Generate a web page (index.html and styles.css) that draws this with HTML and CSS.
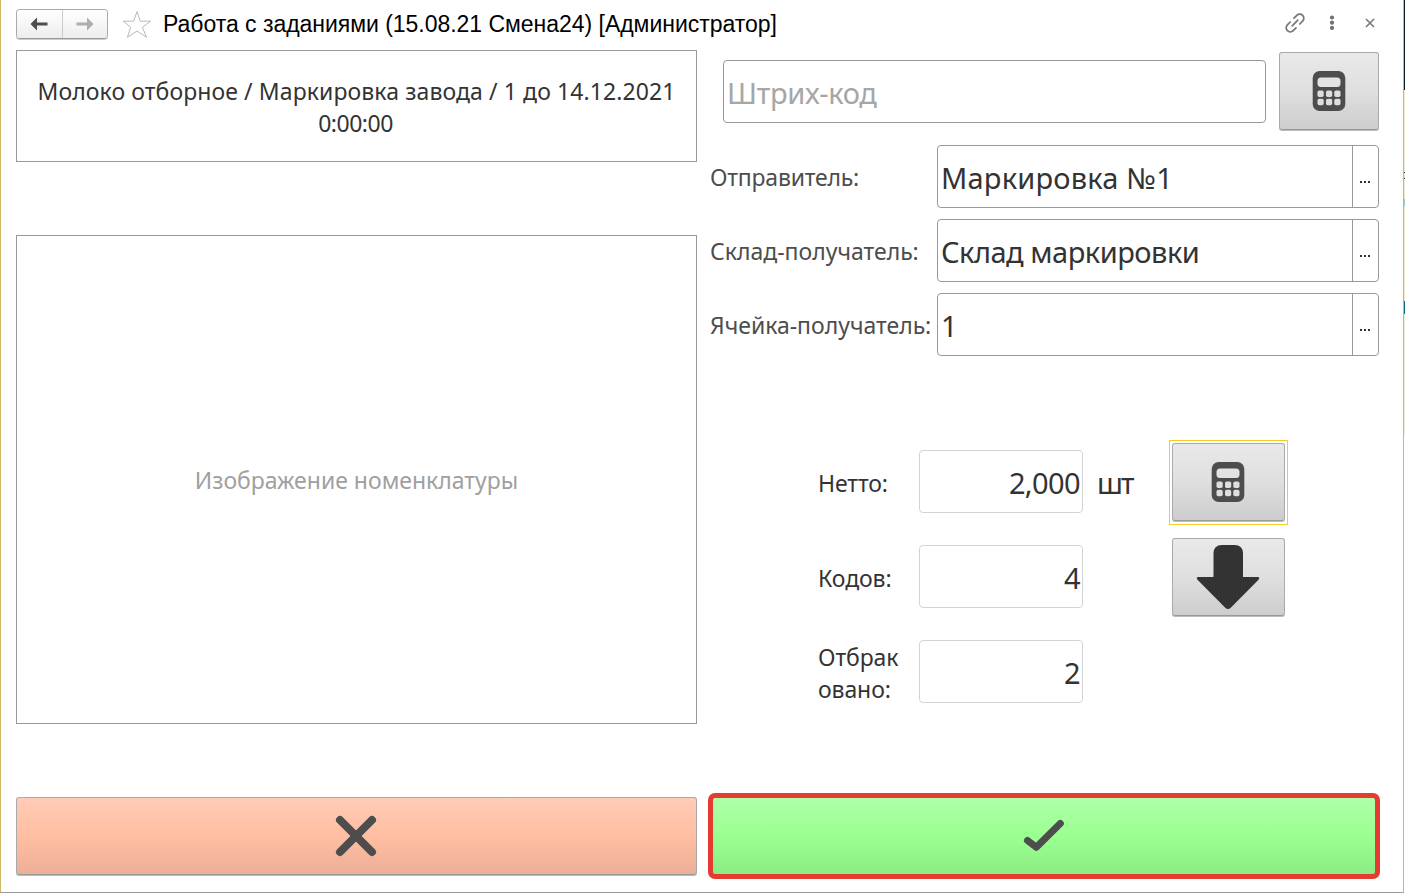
FILE: index.html
```html
<!DOCTYPE html>
<html lang="ru">
<head>
<meta charset="utf-8">
<title>Работа с заданиями</title>
<link rel="stylesheet" href="styles.css">
</head>
<body>
<div class="desktop">
<div class="window">
  <header class="titlebar">
    <div class="nav">
      <button class="nav-btn" aria-label="Назад"><svg width="18" height="14" viewBox="0 0 18 14"><path d="M0.5 7 7 .5V5.500H17.500V8.500H7V13.500Z" fill="#4d4d4d"/></svg></button>
      <button class="nav-btn" aria-label="Вперед"><svg width="18" height="14" viewBox="0 0 18 14"><path d="M17.500 7 11 .5V5.500H.5V8.500H11V13.500Z" fill="#adadad"/></svg></button>
    </div>
    <svg class="star" width="30" height="29" viewBox="0 0 30 29"><path d="M15 1.500 18.300 11.200H28.700L20.400 17.200 24.600 27.300 15 21 5.400 27.300 8.700 17.200 1.300 11.200H11.700Z" fill="none" stroke="#b4bac0" stroke-width="1"/></svg>
    <h1 class="title">Работа с заданиями (15.08.21 Смена24) [Администратор]</h1>
    <div class="tools">
      <svg width="20" height="20" viewBox="0 0 20 20" fill="none" stroke="#757575" stroke-width="1.700" stroke-linecap="round"><path d="M7.200 12.800 12.800 7.200M9 5.200 11.800 2.400A3.900 3.900 0 0 1 17.600 8.200L14.800 11M11 14.800 8.200 17.600A3.900 3.900 0 0 1 2.400 11.800L5.200 9"/></svg>
      <svg width="6" height="16" viewBox="0 0 6 16" fill="#707070"><circle cx="3" cy="2.500" r="2.100"/><circle cx="3" cy="7.700" r="2.100"/><circle cx="3" cy="12.900" r="2.100"/></svg>
      <svg width="10" height="10" viewBox="0 0 10 10" stroke="#777" stroke-width="1.600"><path d="M1 1 9 9M9 1 1 9"/></svg>
    </div>
  </header>
  <main class="content">
    <section class="left">
      <div class="product">Молоко отборное / Маркировка завода / 1 до 14.12.2021<br><span class="time">0:00:00</span></div>
      <div class="picture"><span>Изображение номенклатуры</span></div>
    </section>
    <section class="right">
      <div class="scan">
        <div class="barcode"><span>Штрих-код</span></div>
        <button class="btn calc-btn" aria-label="Калькулятор"><svg width="34" height="42" viewBox="0 0 34 42"><rect x=".7" y="1" width="32.600" height="40" rx="7" fill="#4d4d4d"/><rect x="5.500" y="7.500" width="23" height="9.500" rx="3.500" fill="#e3e3e3"/><g fill="#dedede"><rect x="5.500" y="20.500" width="6.200" height="6.500" rx="1.700"/><rect x="14" y="20.500" width="6.200" height="6.500" rx="1.700"/><rect x="22.300" y="20.500" width="6.200" height="6.500" rx="1.700"/><rect x="5.500" y="28.700" width="6.200" height="6.500" rx="1.700"/><rect x="14" y="28.700" width="6.200" height="6.500" rx="1.700"/><rect x="22.300" y="28.700" width="6.200" height="6.500" rx="1.700"/></g></svg></button>
      </div>
      <div class="fields">
        <label class="sender">Отправитель:</label>
        <div class="field"><span class="value value-sender">Маркировка №1</span><span class="pick"><i></i><i></i><i></i></span></div>
        <label>Склад-получатель:</label>
        <div class="field"><span class="value value-store">Склад маркировки</span><span class="pick"><i></i><i></i><i></i></span></div>
        <label>Ячейка-получатель:</label>
        <div class="field"><span class="value">1</span><span class="pick"><i></i><i></i><i></i></span></div>
      </div>
      <div class="totals">
        <label>Нетто:</label><div class="number">2,000</div><span class="unit">шт</span>
        <div class="focus-frame"><button class="btn" aria-label="Калькулятор"><svg width="34" height="42" viewBox="0 0 34 42"><rect x=".7" y="1" width="32.600" height="40" rx="7" fill="#4d4d4d"/><rect x="5.500" y="7.500" width="23" height="9.500" rx="3.500" fill="#e3e3e3"/><g fill="#dedede"><rect x="5.500" y="20.500" width="6.200" height="6.500" rx="1.700"/><rect x="14" y="20.500" width="6.200" height="6.500" rx="1.700"/><rect x="22.300" y="20.500" width="6.200" height="6.500" rx="1.700"/><rect x="5.500" y="28.700" width="6.200" height="6.500" rx="1.700"/><rect x="14" y="28.700" width="6.200" height="6.500" rx="1.700"/><rect x="22.300" y="28.700" width="6.200" height="6.500" rx="1.700"/></g></svg></button></div>
        <label>Кодов:</label><div class="number">4</div><span class="unit"></span>
        <button class="btn" aria-label="Вниз"><svg width="64" height="66" viewBox="0 0 64 66"><path d="M26 1H38.500Q47 1 47 9.500V33H62Q64.300 33.500 62.500 35.700L34.500 64Q32 66 29.500 64L1.500 35.700Q-.3 33.500 2 33H17.500V9.500Q17.500 1 26 1Z" fill="#333"/></svg></button>
        <label>Отбрак<br>овано:</label><div class="number">2</div><span class="unit"></span><span></span>
      </div>
    </section>
  </main>
  <footer class="actions">
    <button class="btn cancel" aria-label="Отмена"><svg width="42" height="42" viewBox="0 0 42 42"><path d="M5 5 37 37M37 5 5 37" stroke="#4d4d4d" stroke-width="8" stroke-linecap="round"/></svg></button>
    <button class="btn confirm" aria-label="Готово"><svg width="42" height="34" viewBox="0 0 42 34"><path d="M4.500 21.500 13.300 28.300 37.300 4.500" fill="none" stroke="#4d4d4d" stroke-width="7" stroke-linecap="round" stroke-linejoin="round"/></svg></button>
  </footer>
</div>
<div class="behind"></div>
</div>
</body>
</html>
```
FILE: styles.css
```css
* { box-sizing: border-box; }
body { margin: 0; background: #fff; font-family: "Noto Sans", sans-serif; color: #333; overflow: hidden; }
button { padding: 0; font: inherit; }
svg { display: block; flex: none; }
.desktop { display: flex; width: 1405px; height: 893px; }
.window { width: 1404px; height: 893px; padding: 0 23px 0 15px; border: solid #999; border-width: 0 1px 1px; border-left-color: #cfb968; border-right-color: #cfb968; display: flex; flex-direction: column; }
.behind { width: 1px; background: linear-gradient(#071d22 0 90px, #f2ecd0 90px 172px, #333 172px 173px, #eee8cd 173px 178px, #333 178px 179px, #eee8cd 179px 199px, #91cbc9 199px 206px, #eee8cd 206px 301px, #096a91 301px 314px, #e6eee0 314px 435px, #fff 435px); }
.titlebar { display: flex; height: 50px; flex: none; align-items: flex-start; }
.nav { display: flex; width: 92px; height: 30px; margin-top: 9px; border: 1px solid #aaa; border-bottom-color: #999; border-radius: 4px; box-shadow: 0 1px #ccc; overflow: hidden; }
.nav-btn { flex: 1; display: flex; align-items: center; justify-content: center; border: 0; background: linear-gradient(#fff, #ededed); }
.nav-btn + .nav-btn { border-left: 1px solid #ccc; }
.star { margin: 10px 0 0 14px; }
.title { margin: 9px 0 0 11px; font: 23px/30px "Liberation Sans", sans-serif; color: #000; white-space: nowrap; letter-spacing: -.03px; }
.tools { display: flex; align-items: center; margin: 13px 5px 0 auto; height: 20px; gap: 24px; }
.tools svg:last-child { margin-left: 6px; }
.content { display: grid; grid-template-columns: 681px 671px; gap: 11px; height: 747px; flex: none; }
.left { display: flex; flex-direction: column; gap: 73px; }
.product { height: 112px; border: 1px solid #999; padding-top: 24px; text-align: center; font-size: 23px; line-height: 32px; letter-spacing: .1px; white-space: nowrap; }
.time { letter-spacing: -.5px; margin-left: -2px; }
.picture { height: 489px; border: 1px solid #999; display: flex; align-items: center; justify-content: center; color: #a0a0a0; font-size: 23px; }
.right { display: flex; flex-direction: column; }
.scan { display: flex; justify-content: space-between; padding: 2px 0 0 15px; height: 95px; }
.barcode { width: 543px; height: 63px; margin-top: 8px; padding-left: 3px; border: 1px solid #999; border-radius: 4px; color: #a6a6a6; font-size: 29px; line-height: 64px; letter-spacing: -.3px; }
.btn { width: 113px; height: 78px; display: flex; align-items: center; justify-content: center; border: 1px solid #aaa; border-bottom-color: #999; border-radius: 3px; background: linear-gradient(#e9e9e9, #dfdfdf 50%, #cdcdcd); box-shadow: 0 1px #bbb; }
.calc-btn { width: 100px; }
.fields { display: grid; grid-template-columns: 227px 442px; grid-auto-rows: 63px; row-gap: 11px; padding-left: 2px; font-size: 23px; line-height: 65px; color: #4d4d4d; white-space: nowrap; }
.sender { letter-spacing: -.2px; }
.field { display: flex; border: 1px solid #999; border-radius: 4px; color: #333; }
.value { flex: 1; padding-left: 3px; font-size: 29px; line-height: 64px; }
.value-sender { letter-spacing: .2px; }
.value-store { letter-spacing: -.5px; }
.pick { width: 26px; border-left: 1px solid #999; display: flex; gap: 2px; justify-content: center; align-items: center; padding: 11px 1px 0 0; }
.pick i { width: 2px; height: 2px; background: #333; }
.totals { display: grid; grid-template-columns: 101px 164px 86px 119px; grid-auto-rows: 79px; row-gap: 16px; align-items: center; margin: 86px 0 0 110px; font-size: 23px; line-height: 32px; }
.totals label { padding-top: 3px; letter-spacing: -.1px; }
.totals .btn { padding-right: 2px; margin-left: 3px; }
.number { height: 63px; border: 1px solid #d4d4d4; border-radius: 4px; text-align: right; padding-right: 2px; font-size: 29px; line-height: 64px; letter-spacing: -.6px; }
.unit { padding: 3px 0 0 14px; font-size: 29px; letter-spacing: -2px; }
.focus-frame { width: 119px; height: 85px; padding: 2px 0; border: 1px solid #f8ca24; margin: -2px 0 -3px; }
.focus-frame .btn { margin-left: 2px; }
.actions { display: flex; gap: 11px; }
.cancel { width: 681px; padding-right: 1px; background: linear-gradient(#ffccb8, #ffbda0 55%, #ebae98); }
.confirm { width: 672px; height: 86px; margin-top: -4px; border: 5px solid #e63b30; border-radius: 7px; box-shadow: none; background: linear-gradient(#afffa8, #98ff8f 55%, #8ceb84); }
```
